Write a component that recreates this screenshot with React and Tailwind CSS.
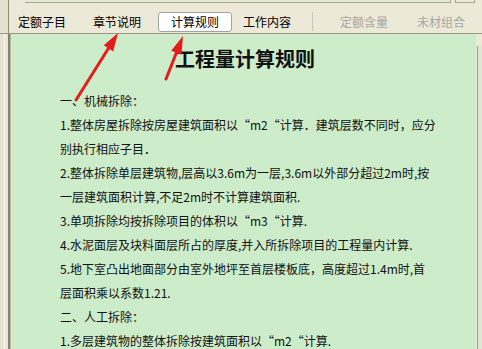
const tabs = [
  { label: '定额子目', gap: 'mr-[27px]' },
  { label: '章节说明', gap: 'mr-[17px]' },
  { label: '计算规则', gap: 'mr-[11px]', active: true },
  { label: '工作内容', gap: 'mr-[21px]' },
];

const lines = [
  '一、机械拆除：',
  '1.整体房屋拆除按房屋建筑面积以“m2“计算．建筑层数不同时，应分',
  '别执行相应子目．',
  '2.整体拆除单层建筑物,层高以3.6m为一层,3.6m以外部分超过2m时,按',
  '一层建筑面积计算,不足2m时不计算建筑面积.',
  '3.单项拆除均按拆除项目的体积以“m3“计算.',
  '4.水泥面层及块料面层所占的厚度,并入所拆除项目的工程量内计算.',
  '5.地下室凸出地面部分由室外地坪至首层楼板底，高度超过1.4m时,首',
  '层面积乘以系数1.21.',
  '二、人工拆除：',
  '1.多层建筑物的整体拆除按建筑面积以“m2“计算.',
];

function Arrows() {
  // red annotation arrows drawn over the screenshot
  return (
    <svg className="absolute inset-0 pointer-events-none" width="482" height="349">
      <line x1="76" y1="100" x2="108.5" y2="48.2" stroke="#e51c1c" strokeWidth="3" strokeLinecap="round" />
      <polygon points="118,33 113.2,51.5 103.8,45.3" fill="#e51c1c" />
      <line x1="166" y1="79" x2="176.4" y2="52.7" stroke="#e51c1c" strokeWidth="3" strokeLinecap="round" />
      <polygon points="183,36 181.5,54.7 171.2,50.7" fill="#e51c1c" />
    </svg>
  );
}

export default function App() {
  return (
    <div
      className="relative w-[482px] h-[349px] overflow-hidden bg-[#ece9d8] flex flex-col text-black"
      style={{ fontFamily: '"Noto Sans CJK SC", "Noto Sans", sans-serif' }}
    >
      {/* top strip */}
      <div className="h-[10px] flex shrink-0">
        <div className="w-[9px] border-r border-[#8c8c74] bg-[#e4e1cf]" />
        <div className="ml-[16px] w-[426px] h-[3px] bg-[#e6ead4] border-b border-r border-[#a9a892]" />
        <div className="ml-[4px] w-[20px] h-[3px] border-b border-x border-[#a9a892]" />
      </div>

      {/* tab bar */}
      <div className="h-[24px] flex items-center shrink-0 border-b border-[#9a9884] text-[12px] leading-none whitespace-nowrap">
        <div className="w-[9px] self-stretch border-r border-[#8c8c74] bg-[#e4e1cf]" />
        <div className="flex items-center pl-[9px]">
          {tabs.map(t =>
            t.active ? (
              <div
                key={t.label}
                className={`${t.gap} w-[74px] h-[20px] flex items-center justify-center bg-white border border-[#a3a3a3] rounded-[3px] shrink-0`}
              >
                {t.label}
              </div>
            ) : (
              <div key={t.label} className={`${t.gap} shrink-0`}>
                {t.label}
              </div>
            )
          )}
          <div className="w-px h-[19px] bg-[#cbc7b2] shrink-0" />
          <div className="ml-[27px] text-[#a8a8a0] shrink-0">定额含量</div>
          <div className="ml-[29px] text-[#a8a8a0] shrink-0">未材组合</div>
        </div>
      </div>

      {/* body */}
      <div className="flex-1 flex min-h-0">
        <div className="w-[11px] flex shrink-0">
          <div className="w-[4px] bg-[#e6e3d0]" />
          <div className="w-px bg-[#fbfaf2]" />
          <div className="w-[3px] bg-[#e9e6d4]" />
          <div className="w-[2px] bg-[#84836c]" />
          <div className="w-px bg-[#b9b8a4]" />
        </div>
        <div className="flex-1 bg-[#cdecca] pt-[11px] pl-[49px] overflow-hidden">
          <h1 className="h-[28px] leading-[28px] text-[20px] font-bold text-[#111] text-center pr-[46px]">
            工程量计算规则
          </h1>
          <div className="mt-[16px] text-[12px] leading-[24px] text-[#111]">
            {lines.map((l, i) => (
              <div key={i} className="whitespace-nowrap">
                {l}
              </div>
            ))}
          </div>
        </div>
        <div className="w-[6px] flex shrink-0">
          <div className="w-px bg-[#e2efd9]" />
          <div className="flex-1 bg-[#dfe5d2] border-l border-[#9aa08a] mt-[12px]" />
        </div>
      </div>

      <Arrows />
    </div>
  );
}
